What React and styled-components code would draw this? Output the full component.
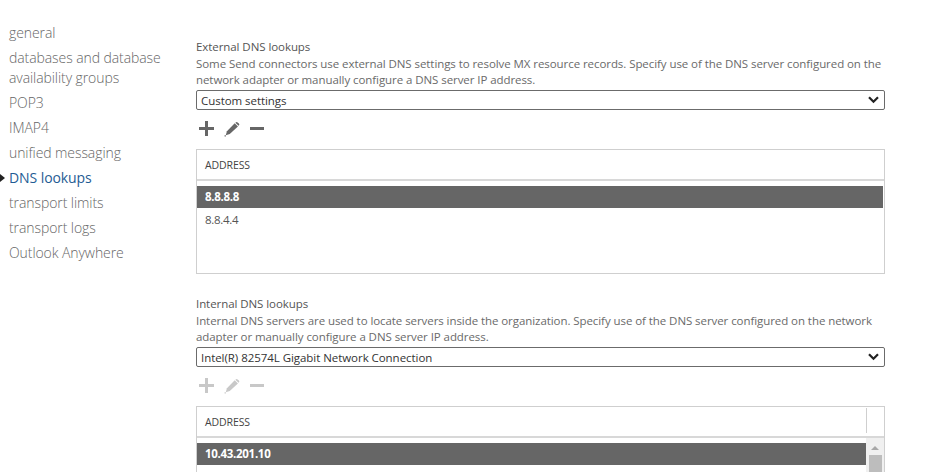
import React from "react";
import styled, { createGlobalStyle } from "styled-components";

const GlobalStyle = createGlobalStyle`
  html, body {
    margin: 0;
    height: 472px;
    overflow: hidden;
    background: #fff;
  }
  body {
    font-family: "Open Sans", "Noto Sans", sans-serif;
    color: #333;
  }
`;

const navItems = [
  "general",
  "databases and database availability groups",
  "POP3",
  "IMAP4",
  "unified messaging",
  "DNS lookups",
  "transport limits",
  "transport logs",
  "Outlook Anywhere",
];

const PlusIcon = () => (
  <svg width="15" height="15" viewBox="0 0 15 15">
    <path d="M0 6h6V0h3v6h6v3H9v6H6V9H0z" fill="currentColor" />
  </svg>
);

const PencilIcon = () => (
  <svg width="16" height="16" viewBox="0 0 17 16">
    <path d="M11.4 2l3.4 3.3-8.7 8-4.2 1.4 1.2-4.3z" fill="currentColor" />
    <path d="M12.4 1a1.5 1.5 0 0 1 2.1 0l1.3 1.2a1.5 1.5 0 0 1 0 2.1l-.3.3-3.4-3.3z" fill="currentColor" />
    <path d="M0.6 14.6h1.4V16H0.6z" fill="currentColor" />
  </svg>
);

const MinusIcon = () => (
  <svg width="14" height="3" viewBox="0 0 14 3">
    <rect width="14" height="3" fill="currentColor" />
  </svg>
);

const ChevronIcon = () => (
  <svg width="11" height="8" viewBox="0 0 11 8">
    <path d="M1 1.2l4.5 4.6L10 1.2" fill="none" stroke="#222" strokeWidth="2.2" />
  </svg>
);

const Page = styled.div`
  display: flex;
  height: 472px;
  overflow: hidden;
`;

const Nav = styled.nav`
  width: 196px;
  flex: none;
  padding: 23px 20px 0 9px;
  box-sizing: border-box;
  display: flex;
  flex-direction: column;
  gap: 5px;
`;

const NavItem = styled.div`
  position: relative;
  font-size: 14px;
  line-height: 20px;
  letter-spacing: -0.08px;
  color: ${(p) => (p.$active ? "#1f5c94" : "#666")};
  font-weight: ${(p) => (p.$active ? 400 : 300)};

  &::before {
    content: ${(p) => (p.$active ? '""' : "none")};
    position: absolute;
    left: -9px;
    top: 6px;
    border-left: 5px solid #222;
    border-top: 4px solid transparent;
    border-bottom: 4px solid transparent;
  }
`;

const Main = styled.main`
  width: 689px;
  flex: none;
  padding-top: 39px;
  display: flex;
  flex-direction: column;
  gap: 22px;
`;

const Section = styled.section`
  display: flex;
  flex-direction: column;
`;

const Heading = styled.div`
  font-size: 11.5px;
  line-height: 16px;
  letter-spacing: -0.07px;
  color: #555;
  margin-bottom: 1px;
`;

const Description = styled.div`
  font-size: 11.5px;
  line-height: 16px;
  letter-spacing: -0.07px;
  color: #6a6a6a;
  margin-bottom: 2px;
`;

const Select = styled.div`
  height: 20px;
  box-sizing: border-box;
  border: 1px solid #6b6b6b;
  border-radius: 2px;
  padding: 0 3px 0 4px;
  display: flex;
  align-items: center;
  justify-content: space-between;
  font-size: 11.5px;
  letter-spacing: -0.05px;
  color: #333;

  svg {
    margin-right: 2px;
  }
`;

const Toolbar = styled.div`
  height: 39px;
  box-sizing: border-box;
  padding: 0 0 2px 3px;
  display: flex;
  align-items: center;
  gap: 10px;
  color: ${(p) => (p.$disabled ? "#c8c8c8" : "#666")};
`;

const Table = styled.div`
  border: 1px solid #cfcfcf;
  height: ${(p) => p.$height}px;
  box-sizing: border-box;
  display: flex;
  flex-direction: column;
  flex: none;
`;

const HeaderRow = styled.div`
  height: 31px;
  flex: none;
  box-sizing: border-box;
  border-bottom: 2px solid #d8d8d8;
  display: flex;
`;

const HeaderCell = styled.div`
  flex: 1;
  padding-left: 8px;
  font-size: 10.5px;
  line-height: 30px;
  letter-spacing: -0.1px;
  color: #444;
`;

const HeaderSpacer = styled.div`
  width: 17px;
  margin: 1px 0 3px;
  border-left: 1px solid #cfcfcf;
`;

const Body = styled.div`
  flex: 1;
  display: flex;
  min-height: 0;
  padding-top: 5px;
`;

const Rows = styled.div`
  flex: 1;
  min-width: 0;
  margin-right: ${(p) => (p.$scroll ? 0 : 1)}px;
`;

const Row = styled.div`
  height: 22px;
  padding-left: 8px;
  font-size: 11.5px;
  line-height: 22px;
  letter-spacing: -0.3px;
  background: ${(p) => (p.$selected ? "#666" : "transparent")};
  color: ${(p) => (p.$selected ? "#fff" : "#555")};
  font-weight: ${(p) => (p.$selected ? 700 : 400)};
  margin-bottom: 1px;
`;

const Scrollbar = styled.div`
  width: 18px;
  flex: none;
  margin-top: -5px;
  padding-top: 8px;
  background: #f0f0f0;
  display: flex;
  flex-direction: column;
  align-items: center;
  gap: 5px;
`;

const ScrollArrow = styled.div`
  border-left: 4px solid transparent;
  border-right: 4px solid transparent;
  border-bottom: 4px solid #a8a8a8;
`;

const ScrollThumb = styled.div`
  width: 13px;
  height: 40px;
  background: #bdbdbd;
`;

const DnsSection = ({ title, description, value, disabled, height, rows, scroll }) => (
  <Section>
    <Heading>{title}</Heading>
    <Description>{description}</Description>
    <Select>
      {value}
      <ChevronIcon />
    </Select>
    <Toolbar $disabled={disabled}>
      <PlusIcon />
      <PencilIcon />
      <MinusIcon />
    </Toolbar>
    <Table $height={height}>
      <HeaderRow>
        <HeaderCell>ADDRESS</HeaderCell>
        {scroll && <HeaderSpacer />}
      </HeaderRow>
      <Body>
        <Rows $scroll={scroll}>
          {rows.map((row, i) => (
            <Row key={row} $selected={i === 0}>
              {row}
            </Row>
          ))}
        </Rows>
        {scroll && (
          <Scrollbar>
            <ScrollArrow />
            <ScrollThumb />
          </Scrollbar>
        )}
      </Body>
    </Table>
  </Section>
);

export default function App() {
  return (
    <>
      <GlobalStyle />
      <Page>
        <Nav>
          {navItems.map((item) => (
            <NavItem key={item} $active={item === "DNS lookups"}>
              {item}
            </NavItem>
          ))}
        </Nav>
        <Main>
          <DnsSection
            title="External DNS lookups"
            description="Some Send connectors use external DNS settings to resolve MX resource records. Specify use of the DNS server configured on the network adapter or manually configure a DNS server IP address."
            value="Custom settings"
            height={125}
            rows={["8.8.8.8", "8.8.4.4"]}
          />
          <DnsSection
            title="Internal DNS lookups"
            description="Internal DNS servers are used to locate servers inside the organization. Specify use of the DNS server configured on the network adapter or manually configure a DNS server IP address."
            value="Intel(R) 82574L Gigabit Network Connection"
            disabled
            height={125}
            rows={["10.43.201.10"]}
            scroll
          />
        </Main>
      </Page>
    </>
  );
}
